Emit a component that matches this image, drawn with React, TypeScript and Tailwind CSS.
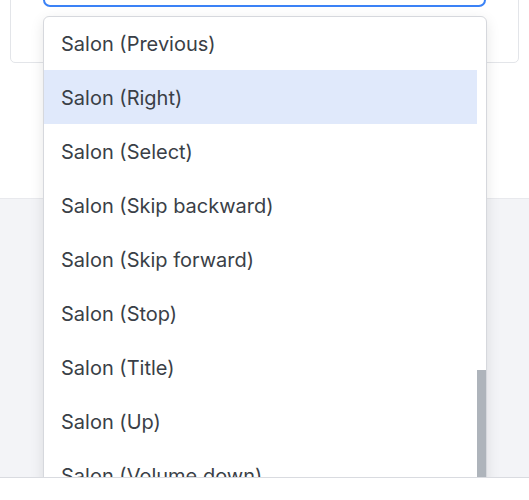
import React from "react";

const items = [
  "Salon (Previous)",
  "Salon (Right)",
  "Salon (Select)",
  "Salon (Skip backward)",
  "Salon (Skip forward)",
  "Salon (Stop)",
  "Salon (Title)",
  "Salon (Up)",
  "Salon (Volume down)",
];

export default function App() {
  return (
    <div className="w-[529px] h-[500px] bg-white" style={{ fontFamily: "Inter, 'Noto Sans', sans-serif" }}>
      <div className="relative h-[478px] overflow-hidden border-b border-[#d9dbe0]">
        <div className="flex h-[198px] flex-col bg-white px-[10px]">
          <div className="mt-[-40px] h-[103px] rounded-[5px] border border-[#e3e5e9] bg-white px-[32px]">
            <div className="h-[46px] rounded-[7px] border-2 border-[#3b82f6] bg-white" />
          </div>
        </div>
        <div className="h-[280px] bg-[#f3f4f7] border-t border-[#e8e9ed]" />
        <div className="absolute left-[43px] top-[16px] w-[444px] h-[520px] overflow-hidden rounded-[6px] border border-[#d6d8dd] bg-white shadow-[0_4px_14px_rgba(0,0,0,0.10)]">
          <div className="mt-[-1px] flex flex-col pr-[9px]">
            {items.map((t, i) => (
              <div
                key={t}
                className={`flex h-[54px] items-center pl-[17px] text-[20px] text-[#3a3f47] ${i === 1 ? "bg-[#e0e9fb]" : ""}`}
              >
                <span className="translate-y-[0.5px]">{t}</span>
              </div>
            ))}
          </div>
          <div className="absolute right-0 top-[353px] w-[9px] h-[140px] bg-[#aeb4bb]" />
        </div>
      </div>
    </div>
  );
}
